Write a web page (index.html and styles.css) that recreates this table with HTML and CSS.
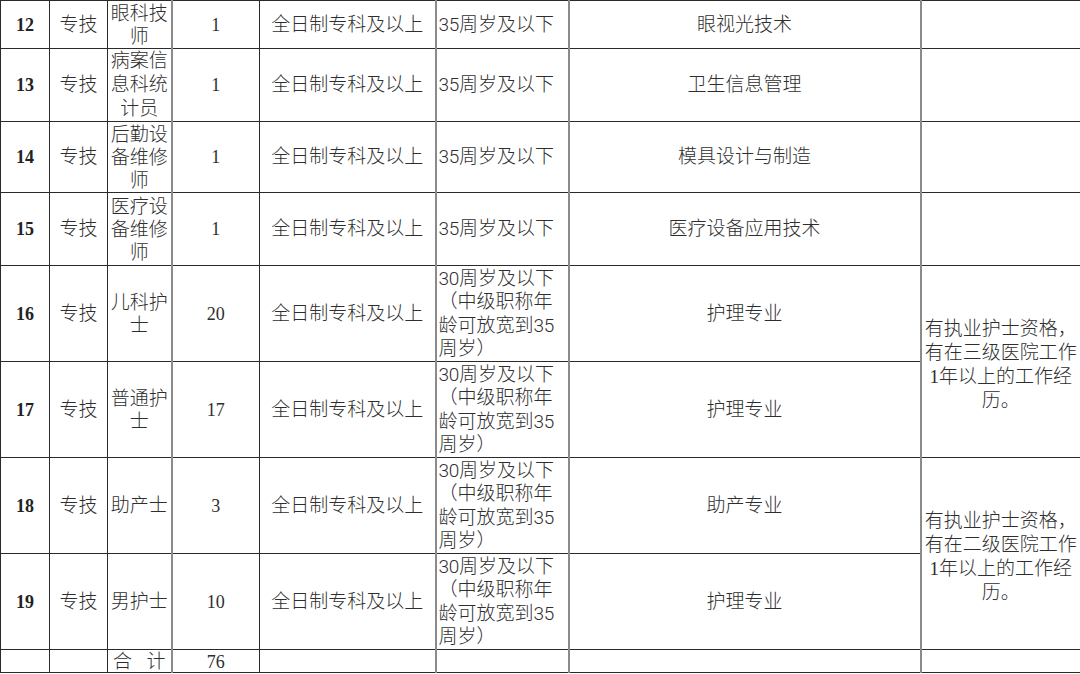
FILE: index.html
```html
<!DOCTYPE html>
<html lang="zh-CN">
<head>
<meta charset="utf-8">
<title>招聘岗位表</title>
<link rel="stylesheet" href="styles.css">
</head>
<body>
<table class="jobs">
  <colgroup>
    <col class="c-num"><col class="c-type"><col class="c-pos"><col class="c-count">
    <col class="c-edu"><col class="c-age"><col class="c-major"><col class="c-note">
  </colgroup>
  <tbody>
    <tr class="r12">
      <td class="num">12</td><td>专技</td><td class="pos">眼科技<br>师</td><td class="cnt">1</td>
      <td>全日制专科及以上</td><td class="age"><span class="d">35</span>周岁及以下</td><td>眼视光技术</td><td></td>
    </tr>
    <tr class="r13">
      <td class="num">13</td><td>专技</td><td class="pos wide">病案信<br>息科统<br>计员</td><td class="cnt">1</td>
      <td>全日制专科及以上</td><td class="age"><span class="d">35</span>周岁及以下</td><td>卫生信息管理</td><td></td>
    </tr>
    <tr class="r14">
      <td class="num">14</td><td>专技</td><td class="pos">后勤设<br>备维修<br>师</td><td class="cnt">1</td>
      <td>全日制专科及以上</td><td class="age"><span class="d">35</span>周岁及以下</td><td>模具设计与制造</td><td></td>
    </tr>
    <tr class="r15">
      <td class="num">15</td><td>专技</td><td class="pos">医疗设<br>备维修<br>师</td><td class="cnt">1</td>
      <td>全日制专科及以上</td><td class="age"><span class="d">35</span>周岁及以下</td><td>医疗设备应用技术</td><td></td>
    </tr>
    <tr class="r4l">
      <td class="num">16</td><td>专技</td><td class="pos">儿科护<br>士</td><td class="cnt">20</td>
      <td>全日制专科及以上</td><td class="age"><span class="d">30</span>周岁及以下<br>（中级职称年<br>龄可放宽到<span class="d">35</span><br>周岁）</td><td>护理专业</td>
      <td rowspan="2" class="note">有执业护士资格，<br>有在三级医院工作<br>1年以上的工作经<br>历。</td>
    </tr>
    <tr class="r4l">
      <td class="num">17</td><td>专技</td><td class="pos">普通护<br>士</td><td class="cnt">17</td>
      <td>全日制专科及以上</td><td class="age"><span class="d">30</span>周岁及以下<br>（中级职称年<br>龄可放宽到<span class="d">35</span><br>周岁）</td><td>护理专业</td>
    </tr>
    <tr class="r4l">
      <td class="num">18</td><td>专技</td><td class="pos">助产士</td><td class="cnt">3</td>
      <td>全日制专科及以上</td><td class="age"><span class="d">30</span>周岁及以下<br>（中级职称年<br>龄可放宽到<span class="d">35</span><br>周岁）</td><td>助产专业</td>
      <td rowspan="2" class="note">有执业护士资格，<br>有在二级医院工作<br>1年以上的工作经<br>历。</td>
    </tr>
    <tr class="r4l">
      <td class="num">19</td><td>专技</td><td class="pos">男护士</td><td class="cnt">10</td>
      <td>全日制专科及以上</td><td class="age"><span class="d">30</span>周岁及以下<br>（中级职称年<br>龄可放宽到<span class="d">35</span><br>周岁）</td><td>护理专业</td>
    </tr>
    <tr class="rsum">
      <td></td><td></td><td><span class="total"><span>合</span><span>计</span></span></td><td class="cnt">76</td>
      <td></td><td></td><td></td><td></td>
    </tr>
  </tbody>
</table>
</body>
</html>
```

FILE: styles.css
```css
html, body {
  margin: 0;
  padding: 0;
  background: #ffffff;
}

.jobs {
  width: 1080px;
  table-layout: fixed;
  border-collapse: collapse;
  font-family: "Liberation Serif", "Noto Sans CJK SC", serif;
  font-size: 19px;
  font-weight: 300;
  line-height: 24px;
  color: #2e2e2e;
}

.c-num { width: 49px; }
.c-type { width: 58px; }
.c-pos { width: 64px; }
.c-count { width: 88px; }
.c-edu { width: 176px; }
.c-age { width: 133px; }
.c-major { width: 352px; }
.c-note { width: 160px; }

.jobs td {
  border: 1px solid #2a2a2a;
  padding: 0 1px;
  text-align: center;
  vertical-align: middle;
  overflow: hidden;
  white-space: nowrap;
}

.jobs td:nth-child(3),
.jobs td:nth-child(5),
.jobs td:nth-child(6),
.jobs td:nth-child(7) {
  border-right: 2px solid #8a8a8a;
}

.r12 { height: 48px; }
.r13 { height: 73px; }
.r14 { height: 71px; }
.r15 { height: 73px; }
.r4l { height: 96px; }
.rsum { height: 23px; }

.jobs td.pos {
  line-height: 23px;
}

.jobs td.pos.wide {
  line-height: 24px;
}

.jobs td.num {
  font-weight: bold;
  font-size: 18px;
  color: #222;
}

.jobs td.cnt {
  font-size: 18px;
  font-weight: normal;
}

.jobs td.age {
  text-align: left;
  padding-left: 2px;
  font-family: "Liberation Sans", "Noto Sans CJK SC", sans-serif;
  line-height: 23.5px;
}

.jobs td.age .d {
  font-family: Roboto, "Liberation Sans", sans-serif;
  font-weight: 300;
  letter-spacing: -0.3px;
}

.jobs .rsum td {
  line-height: 20px;
  vertical-align: bottom;
}

.jobs td.note {
  line-height: 24px;
  padding-top: 6px;
}

.total {
  display: flex;
  justify-content: space-between;
  padding: 0 4px;
}
```
